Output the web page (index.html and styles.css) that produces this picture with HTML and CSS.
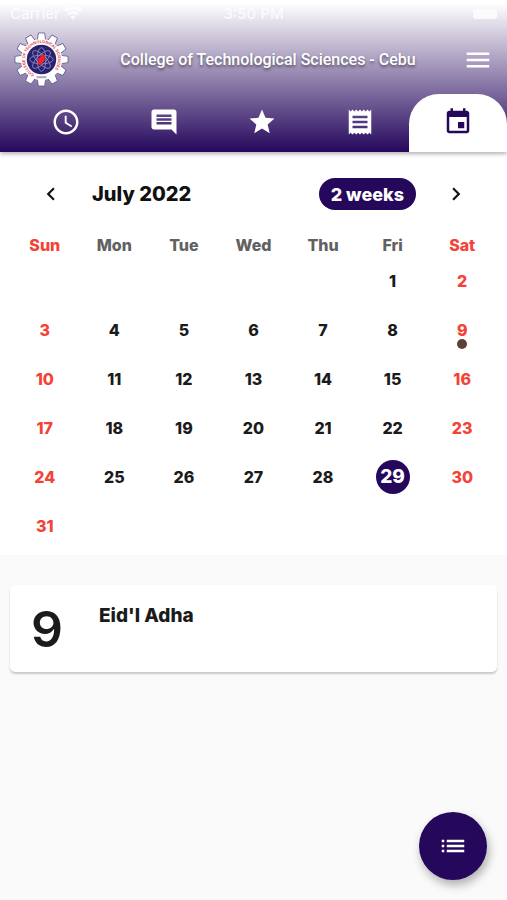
FILE: index.html
```html
<!DOCTYPE html>
<html lang="en">
<head>
    <meta charset="UTF-8">
    <meta name="viewport" content="width=device-width, initial-scale=1.0">
    <title>College of Technological Sciences - Cebu</title>
    <link rel="stylesheet" href="styles.css">
</head>
<body>
    <header class="app-header">
        <div class="status-bar">
            <span class="carrier">Carrier
                <svg width="18" height="13" viewBox="0 0 18 13" fill="currentColor"><path d="M9 13l2.700-3.300a4.200 4.200 0 0 0-5.400 0zM3.300 6l2 2.400a6 6 0 0 1 7.400 0L14.700 6a9 9 0 0 0-11.400 0zM0 2.500l2 2.400a11 11 0 0 1 14 0l2-2.400a14 14 0 0 0-18 0z"/></svg>
            </span>
            <span class="clock">3:50 PM</span>
            <span class="battery"></span>
        </div>
        <div class="title-bar">
            <svg class="logo" viewBox="-28 -28 56 56">
                <defs>
                    <path id="tooth" d="M-4.500-18L-3.200-27H3.200L4.500-18z"/>
                    <ellipse id="orbit" rx="4.500" ry="12"/>
                    <path id="ring" d="M-7.500 15A16.800 16.800 0 1 1 7.500 15"/>
                </defs>
                <g fill="#fff" stroke="#5b5590" stroke-width="0.800">
                    <use href="#tooth"/>
                    <use href="#tooth" transform="rotate(30)"/>
                    <use href="#tooth" transform="rotate(60)"/>
                    <use href="#tooth" transform="rotate(90)"/>
                    <use href="#tooth" transform="rotate(120)"/>
                    <use href="#tooth" transform="rotate(150)"/>
                    <use href="#tooth" transform="rotate(180)"/>
                    <use href="#tooth" transform="rotate(210)"/>
                    <use href="#tooth" transform="rotate(240)"/>
                    <use href="#tooth" transform="rotate(270)"/>
                    <use href="#tooth" transform="rotate(300)"/>
                    <use href="#tooth" transform="rotate(330)"/>
                </g>
                <circle r="21" fill="#fff"/>
                <circle r="15" fill="#29206f"/>
                <g fill="none" stroke="#a5a2d2" stroke-width="0.700">
                    <use href="#orbit"/>
                    <use href="#orbit" transform="rotate(45)"/>
                    <use href="#orbit" transform="rotate(90)"/>
                    <use href="#orbit" transform="rotate(135)"/>
                </g>
                <path d="M1-5L4-4 3-1 4 0-1 6-4 4-3 1-4 0z" fill="#f0202c"/>
                <path d="M-5 18H5" stroke="#a9a9bb" stroke-width="2"/>
                <text class="logo-text"><textPath href="#ring">COLLEGE OF TECHNOLOGICAL SCIENCES</textPath></text>
            </svg>
            <h1>College of Technological Sciences - Cebu</h1>
            <button class="icon-button" aria-label="Menu">
                <svg width="30" height="30" viewBox="0 0 24 24" fill="currentColor"><path d="M3 18h18v-2H3v2zm0-5h18v-2H3v2zm0-7v2h18V6H3z"/></svg>
            </button>
        </div>
        <nav class="tabs">
            <a class="tab" href="#recent" aria-label="Recent">
                <svg viewBox="0 0 24 24"><path d="M11.990 2C6.470 2 2 6.480 2 12s4.470 10 9.990 10C17.520 22 22 17.520 22 12S17.520 2 11.990 2zM12 20c-4.420 0-8-3.580-8-8s3.580-8 8-8 8 3.580 8 8-3.580 8-8 8zm.5-13H11v6l5.250 3.150.75-1.230-4.500-2.670z"/></svg>
            </a>
            <a class="tab" href="#messages" aria-label="Messages">
                <svg viewBox="0 0 24 24"><path d="M21.990 4c0-1.100-.89-2-1.990-2H4c-1.100 0-2 .9-2 2v12c0 1.100.9 2 2 2h14l4 4-.01-18zM18 14H6v-2h12v2zm0-3H6V9h12v2zm0-3H6V6h12v2z"/></svg>
            </a>
            <a class="tab" href="#grades" aria-label="Grades">
                <svg viewBox="0 0 24 24"><path d="M12 17.270L18.180 21l-1.640-7.030L22 9.240l-7.190-.61L12 2 9.190 8.630 2 9.240l5.460 4.730L5.820 21z"/></svg>
            </a>
            <a class="tab" href="#receipts" aria-label="Receipts">
                <svg viewBox="0 0 24 24"><path d="M18 17H6v-2h12v2zm0-4H6v-2h12v2zm0-4H6V7h12v2zM3 22l1.500-1.500L6 22l1.500-1.500L9 22l1.500-1.500L12 22l1.500-1.500L15 22l1.500-1.500L18 22l1.500-1.500L21 22V2l-1.500 1.500L18 2l-1.500 1.500L15 2l-1.500 1.500L12 2l-1.500 1.500L9 2 7.500 3.500 6 2 4.500 3.500 3 2v20z"/></svg>
            </a>
            <a class="tab active" href="#calendar" aria-label="Calendar">
                <svg viewBox="0 0 24 24"><path d="M17 12h-5v5h5v-5zM16 1v2H8V1H6v2H5c-1.110 0-1.990.9-1.990 2L3 19c0 1.100.89 2 2 2h14c1.100 0 2-.9 2-2V5c0-1.100-.9-2-2-2h-1V1h-2zm3 18H5V8h14v11z"/></svg>
            </a>
        </nav>
    </header>

    <main>
        <section class="calendar" id="calendar">
            <div class="calendar-header">
                <button class="icon-button" aria-label="Previous month">
                    <svg width="26" height="26" viewBox="0 0 24 24" fill="currentColor"><path d="M15.410 7.410L14 6l-6 6 6 6 1.410-1.410L10.830 12z"/></svg>
                </button>
                <h2>July 2022</h2>
                <button class="format-button">2 weeks</button>
                <button class="icon-button" aria-label="Next month">
                    <svg width="26" height="26" viewBox="0 0 24 24" fill="currentColor"><path d="M10 6L8.590 7.410 13.170 12l-4.580 4.590L10 18l6-6z"/></svg>
                </button>
            </div>
            <table class="month">
                <thead>
                    <tr><th>Sun</th><th>Mon</th><th>Tue</th><th>Wed</th><th>Thu</th><th>Fri</th><th>Sat</th></tr>
                </thead>
                <tbody>
                    <tr><td></td><td></td><td></td><td></td><td></td><td><button>1</button></td><td><button>2</button></td></tr>
                    <tr><td><button>3</button></td><td><button>4</button></td><td><button>5</button></td><td><button>6</button></td><td><button>7</button></td><td><button>8</button></td><td><button class="has-event">9</button></td></tr>
                    <tr><td><button>10</button></td><td><button>11</button></td><td><button>12</button></td><td><button>13</button></td><td><button>14</button></td><td><button>15</button></td><td><button>16</button></td></tr>
                    <tr><td><button>17</button></td><td><button>18</button></td><td><button>19</button></td><td><button>20</button></td><td><button>21</button></td><td><button>22</button></td><td><button>23</button></td></tr>
                    <tr><td><button>24</button></td><td><button>25</button></td><td><button>26</button></td><td><button>27</button></td><td><button>28</button></td><td><button class="today">29</button></td><td><button>30</button></td></tr>
                    <tr><td><button>31</button></td><td></td><td></td><td></td><td></td><td></td><td></td></tr>
                </tbody>
            </table>
        </section>

        <article class="event-card">
            <span class="event-day">9</span>
            <h3>Eid'l Adha</h3>
        </article>
    </main>

    <button class="fab" aria-label="Event list">
        <svg width="30" height="30" viewBox="0 0 24 24" fill="currentColor"><path d="M3 13h2v-2H3v2zm0 4h2v-2H3v2zm0-8h2V7H3v2zm4 4h14v-2H7v2zm0 4h14v-2H7v2zM7 7v2h14V7H7z"/></svg>
    </button>
</body>
</html>
```
FILE: styles.css
```css
* {
    box-sizing: border-box;
}

body {
    font-family: Inter, Roboto, sans-serif;
    margin: 0;
    min-height: 100vh;
    background-color: #fafafa;
    color: #1b1b1b;
}

h1, h2, h3 {
    margin: 0;
}

button {
    font-family: inherit;
    border: none;
    padding: 0;
    background: none;
    color: inherit;
    cursor: pointer;
}

svg {
    display: block;
}

.app-header {
    position: relative;
    background: linear-gradient(#fff 2%, #25075c);
    color: #fff;
    box-shadow: 0 2px 4px rgba(0, 0, 0, 0.3);
}

.status-bar {
    display: grid;
    grid-template-columns: 1fr auto 1fr;
    align-items: center;
    height: 27px;
    padding: 0 10px;
    font-size: 15px;
    font-weight: 500;
    opacity: 0.8;
}

.carrier {
    display: flex;
    align-items: center;
    gap: 4px;
}

.battery {
    justify-self: end;
    width: 24px;
    height: 10px;
    border-radius: 3px;
    background-color: #fff;
}

.title-bar {
    display: flex;
    align-items: center;
    height: 65px;
    padding: 0 14px;
}

.logo {
    width: 55px;
    height: 55px;
}

.logo-text {
    font-size: 4px;
    font-weight: 700;
    fill: #e0474f;
}

.title-bar h1 {
    flex: 1;
    padding-left: 4px;
    text-align: center;
    font-family: Roboto, Inter, sans-serif;
    font-size: 16px;
    font-weight: 500;
    text-shadow: 0 2px 3px rgba(0, 0, 0, 0.5);
}

.icon-button {
    display: flex;
    align-items: center;
    justify-content: center;
}

.tabs {
    display: flex;
    padding: 2px 0 0 17px;
}

.tab {
    flex: 1;
    display: flex;
    justify-content: center;
    height: 58px;
    padding-top: 13px;
    color: #fff;
}

.tab svg {
    width: 30px;
    height: 30px;
    fill: currentColor;
}

.tab.active {
    background-color: #fff;
    color: #25075c;
    border-radius: 30px 30px 0 0;
}

.calendar {
    background-color: #fff;
    padding: 20px 10px 5px;
}

.calendar-header {
    display: flex;
    align-items: center;
    height: 44px;
    padding: 0 28px;
    color: #111;
}

.calendar-header h2 {
    flex: 1;
    padding-left: 28px;
    font-size: 20px;
    font-weight: 800;
}

.format-button {
    height: 32px;
    padding: 0 12px;
    margin-right: 27px;
    border-radius: 16px;
    background-color: #25075c;
    color: #fff;
    font-size: 18px;
    font-weight: 800;
}

.month {
    width: 100%;
    table-layout: fixed;
    border-collapse: collapse;
}

.month th {
    height: 39px;
    padding: 18px 0 0;
    line-height: 22px;
    vertical-align: top;
    font-size: 16px;
    font-weight: 800;
    color: #616161;
}

.month td {
    height: 49px;
    padding: 0;
}

.month button {
    position: relative;
    display: block;
    width: 34px;
    height: 34px;
    margin: 0 auto;
    border-radius: 50%;
    font-size: 16px;
    font-weight: 800;
}

.month th:first-child,
.month th:last-child,
.month td:first-child,
.month td:last-child {
    color: #f44336;
}

.month .today {
    background-color: #25075c;
    color: #fff;
    font-size: 19px;
}

.month .has-event::after {
    content: "";
    position: absolute;
    left: 12px;
    bottom: -2px;
    width: 10px;
    height: 10px;
    border-radius: 50%;
    background-color: #5d4037;
}

.event-card {
    display: flex;
    height: 87px;
    margin: 30px 10px;
    padding: 18px 21px;
    border-radius: 5px;
    background-color: #fff;
    box-shadow: 0 2px 2px rgba(0, 0, 0, 0.2);
}

.event-day {
    width: 68px;
    font-size: 50px;
    line-height: 52px;
    font-weight: 600;
}

.event-card h3 {
    font-size: 19px;
    line-height: 26px;
    font-weight: 800;
}

.fab {
    position: fixed;
    right: 20px;
    bottom: 20px;
    display: flex;
    align-items: center;
    justify-content: center;
    width: 68px;
    height: 68px;
    border-radius: 50%;
    background-color: #25075c;
    color: #fff;
    box-shadow: 2px 5px 10px rgba(0, 0, 0, 0.3);
}
```
